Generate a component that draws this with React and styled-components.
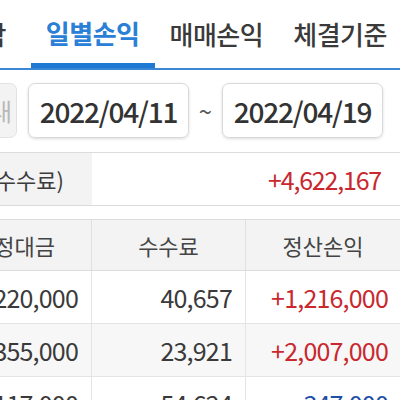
import styled, { createGlobalStyle } from 'styled-components';

const GlobalStyle = createGlobalStyle`
  body {
    margin: 0;
    background: #ffffff;
    font-family: "Noto Sans CJK KR", "Noto Sans", sans-serif;
    overflow: hidden;
  }
`

const tabs = ['종합', '일별손익', '매매손익', '체결기준'];

const rows = [
  { amount: '220,000', fee: '40,657', profit: '+1,216,000', sign: 'up' },
  { amount: '355,000', fee: '23,921', profit: '+2,007,000', sign: 'up' },
  { amount: '117,000', fee: '54,624', profit: '-347,000', sign: 'down' },
];

function App() {
  return (
    <>
      <GlobalStyle />
      <StPage>
        <StTabBar>
          {tabs.map((t, i) => (
            <StTab key={t} $active={i === 1} $first={i === 0}>{t}</StTab>
          ))}
        </StTabBar>

        <StDateRow>
          <StGhostButton>기간 내</StGhostButton>
          <StDateBox>2022/04/11</StDateBox>
          <StTilde>~</StTilde>
          <StDateBox>2022/04/19</StDateBox>
        </StDateRow>

        <StSummary>
          <StSummaryLabel>총손익(-수수료)</StSummaryLabel>
          <StSummaryValue>+4,622,167</StSummaryValue>
        </StSummary>

        <StTable>
          <StHeadCell>약정대금</StHeadCell>
          <StHeadCell>수수료</StHeadCell>
          <StHeadCell $last>정산손익</StHeadCell>
          {rows.map((r, i) => (
            <StRow key={i} $striped={i % 2 === 1}>
              <StCell>{r.amount}</StCell>
              <StCell>{r.fee}</StCell>
              <StCell $last $sign={r.sign}>{r.profit}</StCell>
            </StRow>
          ))}
        </StTable>
      </StPage>
    </>
  )
}

export default App

const StPage = styled.div`
  width: 400px;
  height: 400px;
  overflow: hidden;
  background: #fff;
`

const StTabBar = styled.div`
  display: flex;
  height: 70px;
  box-sizing: border-box;
  border-bottom: 2px solid #3a87d3;
  margin-left: -56px;
`

const StTab = styled.div`
  flex: none;
  box-sizing: border-box;
  height: 68px;
  display: flex;
  align-items: center;
  padding: 0 ${({ $first }) => ($first ? '25px' : '15px')} 0 15px;
  padding-top: ${({ $active }) => ($active ? '2px' : '0')};
  font-size: 26px;
  line-height: 1;
  letter-spacing: -0.5px;
  font-weight: ${({ $active }) => ($active ? 700 : 500)};
  color: ${({ $active }) => ($active ? '#2a80d6' : '#3a3a3a')};
  border-bottom: ${({ $active }) => ($active ? '5px solid #1f78d1' : 'none')};
`

const StDateRow = styled.div`
  display: flex;
  align-items: center;
  height: 55px;
  margin-top: 13px;
`

const StGhostButton = styled.div`
  flex: none;
  box-sizing: border-box;
  width: 80px;
  height: 55px;
  margin-left: -63px;
  margin-right: 11px;
  display: flex;
  align-items: center;
  justify-content: flex-end;
  padding-right: 4px;
  border: 1px solid #e2e2e2;
  border-radius: 7px;
  background: #f3f3f3;
  color: #b9b9b9;
  font-size: 24px;
`

const StDateBox = styled.div`
  flex: none;
  box-sizing: border-box;
  width: 161px;
  height: 55px;
  display: flex;
  align-items: center;
  justify-content: center;
  border: 1px solid #d9d9d9;
  border-radius: 7px;
  box-shadow: 0 1px 3px rgba(0, 0, 0, 0.14);
  color: #333;
  font-size: 28px;
  font-weight: 500;
  letter-spacing: -1.2px;
`

const StTilde = styled.span`
  flex: none;
  width: 33px;
  text-align: center;
  color: #555;
  font-size: 24px;
`

const StSummary = styled.div`
  display: flex;
  height: 54px;
  box-sizing: border-box;
  margin-top: 14px;
  margin-left: -158px;
  border-top: 1px solid #dcdcdc;
  border-bottom: 1px solid #dcdcdc;
`

const StSummaryLabel = styled.div`
  flex: none;
  width: 250px;
  box-sizing: border-box;
  display: flex;
  align-items: center;
  justify-content: flex-end;
  padding-right: 28px;
  background: #f3f3f3;
  color: #3c3c3c;
  font-size: 22px;
`

const StSummaryValue = styled.div`
  flex: 1;
  display: flex;
  align-items: center;
  justify-content: flex-end;
  padding-right: 19px;
  color: #c9282f;
  font-size: 25px;
  letter-spacing: -1.2px;
`

const StTable = styled.div`
  display: grid;
  grid-template-columns: 154px 154px 154px;
  margin-top: 13px;
  margin-left: -62px;
  border-top: 1px solid #dcdcdc;
`

const StHeadCell = styled.div`
  height: 50px;
  display: flex;
  align-items: center;
  justify-content: center;
  background: #f3f3f3;
  border-bottom: 1px solid #dcdcdc;
  border-right: ${({ $last }) => ($last ? 'none' : '1px solid #e0e0e0')};
  color: #444;
  font-size: 22px;
`

const StRow = styled.div`
  display: contents;

  & > div {
    background: ${({ $striped }) => ($striped ? '#f7f7f7' : '#fff')};
  }
`

const StCell = styled.div`
  height: 52px;
  display: flex;
  align-items: center;
  justify-content: flex-end;
  padding-right: ${({ $last }) => ($last ? '12px' : '13px')};
  border-bottom: 1px solid #e4e4e4;
  border-right: ${({ $last }) => ($last ? 'none' : '1px solid #e4e4e4')};
  color: ${({ $sign }) => ($sign === 'up' ? '#c9282f' : $sign === 'down' ? '#1c4fa6' : '#3a3a3a')};
  font-size: 25px;
  letter-spacing: -0.8px;
`
